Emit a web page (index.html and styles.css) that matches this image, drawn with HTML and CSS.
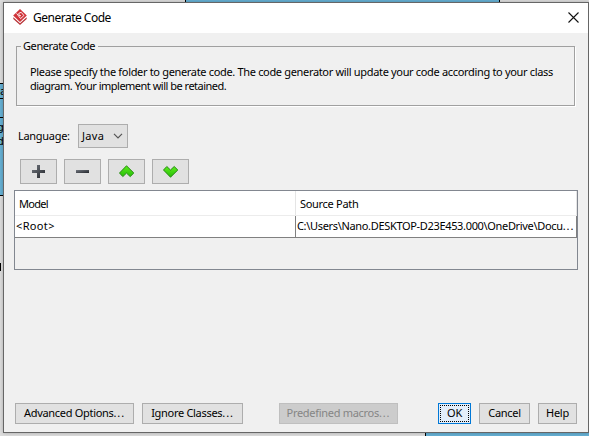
FILE: index.html
```html
<!DOCTYPE html>
<html lang="en">
<head>
<meta charset="utf-8">
<title>Generate Code</title>
<link rel="stylesheet" href="styles.css">
</head>
<body>
<div class="desktop" aria-hidden="true">
  <div class="shape shape-top"></div>
  <div class="shape shape-left"><span class="bit bit-a">a</span><span class="bit bit-g">g</span><span class="bit bit-d">d</span></div>
  <div class="shape shape-bottom"></div>
  <div class="mark"></div>
</div>
<main class="dialog">
  <header class="titlebar">
    <svg class="logo" width="14" height="16" viewBox="0 0 14 16"><path d="M7 0 13.8 6.5 7 13 .2 6.5z" fill="#d0343a"/><path d="M.3 8.3 7 14.3l6.7-6V10L7 16 .3 10z" fill="#b83338"/><path d="M3.6 4.4 7.6 9.6l3.3-3.1-2.7-3.2-2.4 1 .2 2 2 .5" fill="none" stroke="#fff" stroke-width=".9"/></svg>
    <h1 class="title">Generate Code</h1>
    <svg class="close" width="11" height="11" viewBox="0 0 11 11"><path d="M.5.5l10 10M10.5.5l-10 10" stroke="#111" stroke-width="1.1"/></svg>
  </header>
  <fieldset class="group">
    <legend class="legend">Generate Code</legend>
    <p class="line line-one">Please specify the folder to generate code. The code generator will update your code according to your class</p>
    <p class="line line-two">diagram. Your implement will be retained.</p>
  </fieldset>
  <div class="language">
    <label class="label">Language:</label>
    <div class="select"><span class="java">Java</span><svg width="10" height="6" viewBox="0 0 10 6"><path d="M1 .8l4 4 4-4" fill="none" stroke="#555" stroke-width="1.2"/></svg></div>
  </div>
  <div class="tools">
    <button class="tool"><svg width="16" height="16" viewBox="0 0 16 16"><defs><linearGradient id="dark" x2="1" y2="1"><stop stop-color="#737880"/><stop offset="1" stop-color="#24272c"/></linearGradient><linearGradient id="green" x2="0" y2="1"><stop stop-color="#5ced1c"/><stop offset="1" stop-color="#27bd08"/></linearGradient></defs><path d="M6 1h3v5h5v3H9v5H6V9H1V6h5z" fill="url(#dark)"/></svg></button>
    <button class="tool"><svg width="16" height="16" viewBox="0 0 16 16"><path d="M1 6h13v3H1z" fill="url(#dark)"/></svg></button>
    <button class="tool"><svg width="16" height="16" viewBox="0 0 16 16"><path d="M7.5 1.8 14.8 9 11.2 12.6 7.5 9.1 3.8 12.6.5 9z" fill="url(#green)" stroke="#268b12" stroke-linejoin="round"/></svg></button>
    <button class="tool"><svg width="16" height="16" viewBox="0 0 16 16"><path d="M7.5 13.2.5 6 3.8 2.5 7.5 6 11.2 2.5 14.8 6z" fill="url(#green)" stroke="#268b12" stroke-linejoin="round"/></svg></button>
  </div>
  <section class="table">
    <div class="head"><div class="cell model">Model</div><div class="cell source">Source Path</div></div>
    <div class="row"><div class="cell root">&lt;Root&gt;</div><div class="cell path">C:\Users\Nano.DESKTOP-D23E453.000\OneDrive\Docu<span class="dots">...</span></div></div>
  </section>
  <footer class="actions">
    <button class="btn advanced">Advanced Options<span class="dots">...</span></button>
    <button class="btn ignore">Ignore Classes<span class="dots">...</span></button>
    <button class="btn macros" disabled>Predefined macros<span class="dots">...</span></button>
    <button class="btn ok"><span class="focus">OK</span></button>
    <button class="btn cancel">Cancel</button>
    <button class="btn help">Help</button>
  </footer>
</main>
</body>
</html>
```
FILE: styles.css
```css
* { box-sizing: border-box; }
body { margin: 0; width: 589px; height: 436px; overflow: hidden; position: relative; background: #dedede; color: #000; font: 11px/14px "Noto Sans", sans-serif; letter-spacing: -.3px; }
.shape { position: absolute; background: #66b1d5; border: 0 solid #000; }
.shape-top { left: 185px; top: 0; width: 315px; height: 3px; border-width: 0 1px; }
.shape-left { left: 0; top: 83px; width: 4px; height: 113px; border-width: 1px 0; background: linear-gradient(#000, #000) 0 14px / 4px 1px no-repeat, linear-gradient(#000, #000) 0 33px / 4px 1px no-repeat, #66b1d5; }
.shape-bottom { left: 425px; top: 432px; width: 164px; height: 4px; border-left-width: 1px; }
.bit { position: absolute; left: 0; font-family: "DejaVu Sans", sans-serif; }
.bit-a { top: 1px; } .bit-g { left: -3px; top: 37px; } .bit-d { left: -3px; top: 51px; }
.mark { position: absolute; left: 0; top: 263px; width: 1px; height: 8px; background: #000; }
.dialog { position: relative; width: 586px; height: 431px; margin: 2px 0 0 3px; border: 1px solid #666; background: #f0f0f0; box-shadow: 0 0 4px rgba(0, 0, 0, .25); display: flex; flex-direction: column; }
.titlebar { height: 30px; flex: none; background: #fff; display: flex; align-items: center; padding: 0 9px 0 9px; }
.logo { position: relative; top: -1px; }
.close { position: relative; top: -1px; }
.title { margin: 0 auto 0 6px; font: 12px/16px "Noto Sans", sans-serif; letter-spacing: -.5px; }
.group { position: relative; margin: 6px 12px 0; padding: 0 0 0 13px; width: 559px; height: 67px; border: 1px solid #a0a0a0; box-shadow: 1px 1px #fff; }
.legend { padding: 0 3px 0 2px; margin-left: -9px; height: 14px; letter-spacing: -.4px; }
.line { margin: 0; white-space: nowrap; letter-spacing: -.33px; }
.line-one { margin-top: 12px; }
.line-two { letter-spacing: -.5px; }
.language { display: flex; align-items: center; margin: 18px 0 0 14px; height: 24px; }
.label { width: 60px; }
.select { width: 50px; height: 24px; border: 1px solid #adadad; background: #e1e1e1; display: flex; align-items: center; justify-content: space-between; padding: 0 4px 0 3px; letter-spacing: .3px; }
.tools { display: flex; gap: 7px; margin: 11px 0 0 16px; }
.tool { width: 37px; height: 25px; border: 1px solid #adadad; background: #e1e1e1; padding: 0; display: flex; align-items: center; justify-content: center; }
.table { margin: 6px 0 0 10px; width: 564px; height: 80px; border: 1px solid #828790; }
.head { display: grid; grid-template-columns: 281px 281px; height: 25px; background: #fff; border-bottom: 1px solid #ececec; }
.head .cell { padding: 6px 0 0 4px; border-right: 1px solid #e5e5e5; }
.head .model { letter-spacing: -.7px; }
.row { display: grid; grid-template-columns: 280px 282px; height: 22px; background: #fff; border-bottom: 1px solid #808080; }
.cell { white-space: nowrap; overflow: hidden; }
.row .cell { padding: 3px 0 0 1px; }
.row .root { letter-spacing: .35px; }
.row .path { border: solid #808080; border-width: 0 1px; letter-spacing: -.33px; }
.dots { letter-spacing: .9px; }
.actions { display: flex; margin: auto 10px 8px 11px; height: 21px; }
.btn { border: 1px solid #adadad; background: #e1e1e1; color: #000; padding: 0 0 2px; font: inherit; letter-spacing: -.3px; height: 21px; white-space: nowrap; }
.advanced { width: 119px; } .ignore { width: 101px; margin-left: 8px; }
.macros { width: 119px; margin-left: 36px; background: #ccc; border-color: #bfbfbf; color: #858585; }
.ok { width: 33px; margin-left: 40px; border-color: #0078d7; background: #e3eefa; padding: 1px; }
.focus { display: block; height: 17px; line-height: 14px; border: 1px dotted #000; }
.cancel { width: 51px; margin-left: 8px; } .help { width: 39px; margin-left: 8px; }
```
